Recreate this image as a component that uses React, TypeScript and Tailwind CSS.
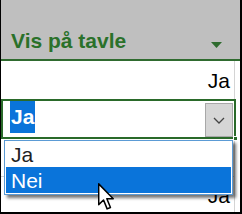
const font = { fontFamily: '"Liberation Sans", Arial, sans-serif' };

const Cursor = () => (
  <svg
    width="18"
    height="28"
    viewBox="0 0 13 20"
    className="absolute left-[97px] top-[183px]"
  >
    <path
      d="M0.5 0.5 L0.5 15.5 L4 12.2 L6.6 18.6 L9 17.6 L6.4 11.3 L11 11.3 Z"
      fill="white"
      stroke="black"
      strokeWidth="1.1"
      strokeLinejoin="round"
    />
  </svg>
);

const App = () => {
  return (
    <div
      className="relative w-[242px] h-[214px] overflow-hidden bg-white border-l border-r-2 border-b-2 border-black"
      style={font}
    >
      {/* header cell */}
      <div className="h-[61px] bg-[#bfbfbf] border-b-2 border-[#2f6b2f] flex items-end justify-between pl-[10px] pr-[18px] pb-[8px]">
        <span className="text-[21px] leading-none font-bold text-[#2a712a]">
          Vis på tavle
        </span>
        <svg width="11" height="6" viewBox="0 0 11 6" className="mb-[3px]">
          <path d="M0 0 L11 0 L5.5 6 Z" fill="#2e6b2e" />
        </svg>
      </div>

      {/* row 1 */}
      <div className="h-[38px] w-[234px] border-r border-[#d4d4d4] flex items-center justify-end pr-[4px]">
        <span className="text-[21px] leading-none text-black">Ja</span>
      </div>

      {/* active cell */}
      <div className="h-[40px] w-[235px] border-2 border-[#2a6a2a] flex items-start justify-between pl-[7px] relative">
        <span className="bg-[#0a74da] text-white text-[21px] leading-[32px] h-[32px] px-[1px] font-semibold">
          Ja
        </span>
        <div className="w-[28px] h-[34px] mt-[2px] mr-[1px] bg-[#d6d6d6] border border-[#a8a8a8] flex items-center justify-center">
          <svg width="12" height="7" viewBox="0 0 12 7">
            <path d="M1 1 L6 6 L11 1" fill="none" stroke="#444" strokeWidth="1.3" />
          </svg>
        </div>
        <div className="absolute -right-[4px] -bottom-[4px] w-[5px] h-[5px] bg-[#2a6a2a] border border-white" />
      </div>

      {/* row 3 */}
      <div className="h-[38px] w-[234px] border-r border-b border-[#d4d4d4] flex items-center justify-end pr-[4px]">
        <span className="text-[21px] leading-none text-black">Ja</span>
      </div>

      {/* row 4 */}
      <div className="h-[38px] w-[234px] border-r border-b border-[#d4d4d4] flex items-center justify-end pr-[4px]">
        <span className="text-[21px] leading-none text-black">Ja</span>
      </div>

      {/* dropdown list */}
      <div className="absolute left-[3px] top-[140px] w-[229px] h-[55px] bg-white border border-[#5b9bd5] shadow-[3px_3px_3px_rgba(0,0,0,0.55)] flex flex-col">
        <div className="h-[26px] flex items-center pl-[6px] text-[21px] leading-none text-[#222]">
          Ja
        </div>
        <div className="h-[26px] mx-[1px] flex items-center pl-[5px] bg-[#0a74da] text-[21px] leading-none text-white">
          Nei
        </div>
      </div>

      <Cursor />
    </div>
  );
};

export default App;
